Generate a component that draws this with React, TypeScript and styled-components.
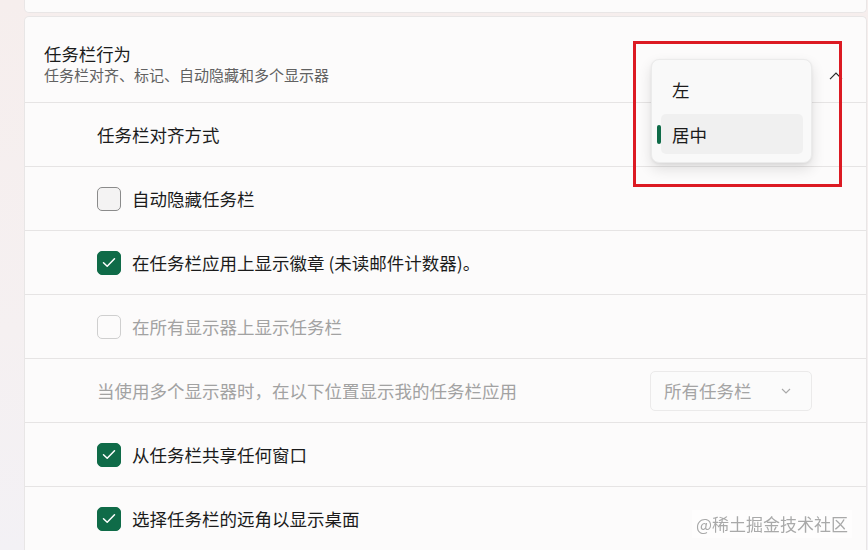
import React from 'react';
import styled, { createGlobalStyle } from 'styled-components';

const GlobalStyle = createGlobalStyle`
  html, body {
    margin: 0;
    padding: 0;
    height: 100%;
    overflow: hidden;
  }
  body {
    font-family: "Noto Sans CJK SC", "Noto Sans", sans-serif;
    background: linear-gradient(180deg, #f6eeed 0%, #f5f0f1 60%, #f3f1f5 100%);
    color: #1b1b1b;
  }
`;

type CheckState = 'off' | 'on' | 'disabled';

interface Setting {
  label: string;
  kind: 'text' | 'check' | 'select';
  state?: CheckState;
}

const settings: Setting[] = [
  { label: '任务栏对齐方式', kind: 'text' },
  { label: '自动隐藏任务栏', kind: 'check', state: 'off' },
  { label: '在任务栏应用上显示徽章 (未读邮件计数器)。', kind: 'check', state: 'on' },
  { label: '在所有显示器上显示任务栏', kind: 'check', state: 'disabled' },
  { label: '当使用多个显示器时，在以下位置显示我的任务栏应用', kind: 'select' },
  { label: '从任务栏共享任何窗口', kind: 'check', state: 'on' },
  { label: '选择任务栏的远角以显示桌面', kind: 'check', state: 'on' },
];

const App = () => {
  return (
    <Page>
      <GlobalStyle />
      <PrevCard />
      <MainCard>
        <Header>
          <HeaderText>
            <Title>任务栏行为</Title>
            <Subtitle>任务栏对齐、标记、自动隐藏和多个显示器</Subtitle>
          </HeaderText>
          <ChevronUp width="14" height="8" viewBox="0 0 14 8">
            <path d="M1 7.2 L7 1.2 L13 7.2" fill="none" stroke="#2a2a2a" strokeWidth="1.2" />
          </ChevronUp>
        </Header>

        {settings.map((s) => (
          <Row key={s.label}>
            {s.kind === 'check' && (
              <Box state={s.state!}>
                {s.state === 'on' && (
                  <svg width="14" height="11" viewBox="0 0 14 11">
                    <path d="M1.5 5.8 L5.2 9.3 L12.5 1.8" fill="none" stroke="#fff" strokeWidth="1.5" strokeLinecap="round" strokeLinejoin="round" />
                  </svg>
                )}
              </Box>
            )}
            <Label muted={s.kind === 'select' || s.state === 'disabled'}>{s.label}</Label>
            {s.kind === 'select' && (
              <Select>
                <span>所有任务栏</span>
                <svg width="10" height="6" viewBox="0 0 10 6">
                  <path d="M1 1 L5 5 L9 1" fill="none" stroke="#a8a8a8" strokeWidth="1.1" />
                </svg>
              </Select>
            )}
          </Row>
        ))}

        <Popup>
          <Option>左</Option>
          <Option selected>居中</Option>
        </Popup>
        <Highlight />
      </MainCard>
      <Watermark>@稀土掘金技术社区</Watermark>
    </Page>
  );
};

export default App;

const Page = styled.div`
  display: flex;
  flex-direction: column;
  gap: 3px;
  padding: 0 1px 0 24px;
  height: 550px;
  box-sizing: border-box;
`;

const PrevCard = styled.div`
  height: 13px;
  box-sizing: border-box;
  background: #fcfbfb;
  border: 1px solid #e9e6e6;
  border-top: none;
  border-radius: 0 0 5px 5px;
`;

const MainCard = styled.div`
  position: relative;
  flex: 1;
  background: #fcfbfb;
  border: 1px solid #e8e6e6;
  border-bottom: none;
  border-radius: 5px 5px 0 0;
`;

const Header = styled.div`
  height: 85px;
  display: flex;
  align-items: center;
  justify-content: space-between;
  padding: 8px 23px 0 19px;
  box-sizing: border-box;
`;

const HeaderText = styled.div`
  display: flex;
  flex-direction: column;
`;

const Title = styled.div`
  font-size: 17.4px;
  line-height: 22px;
  color: #1b1b1b;
`;

const Subtitle = styled.div`
  font-size: 15px;
  line-height: 20px;
  color: #616161;
`;

const ChevronUp = styled.svg`
  align-self: flex-start;
  margin-top: 47px;
`;

const Row = styled.div`
  height: 64px;
  box-sizing: border-box;
  border-top: 1px solid #e6e4e4;
  display: flex;
  align-items: center;
  padding: 0 54px 0 72px;
  gap: 11px;
`;

const Box = styled.div<{ state: CheckState }>`
  width: 24px;
  height: 24px;
  box-sizing: border-box;
  border-radius: 5px;
  flex-shrink: 0;
  display: flex;
  align-items: center;
  justify-content: center;
  background: ${(p) => (p.state === 'on' ? '#0f6b48' : p.state === 'off' ? '#f4f3f3' : 'transparent')};
  border: 1px solid ${(p) => (p.state === 'on' ? '#0f6b48' : p.state === 'off' ? '#8b8b8b' : '#cfcfcf')};
`;

const Label = styled.div<{ muted?: boolean }>`
  font-size: 17.5px;
  line-height: 24px;
  color: ${(p) => (p.muted ? '#a2a2a2' : '#1b1b1b')};
  flex: 1;
  white-space: nowrap;
`;

const Select = styled.div`
  width: 162px;
  height: 40px;
  box-sizing: border-box;
  border: 1px solid #ebeaea;
  border-radius: 5px;
  background: #fbfbfb;
  display: flex;
  align-items: center;
  justify-content: space-between;
  padding: 0 20px 0 13px;
  font-size: 17.5px;
  color: #a4a4a4;
`;

const Popup = styled.div`
  position: absolute;
  left: 626px;
  top: 42px;
  width: 161px;
  box-sizing: border-box;
  padding: 9px 8px 8px 9px;
  display: flex;
  flex-direction: column;
  gap: 5px;
  background: #f9f9f9;
  border: 1px solid #ebebeb;
  border-radius: 8px;
  box-shadow: 0 6px 14px rgba(0, 0, 0, 0.12), 0 1px 3px rgba(0, 0, 0, 0.06);
`;

const Option = styled.div<{ selected?: boolean }>`
  position: relative;
  height: 40px;
  display: flex;
  align-items: center;
  padding-left: 11px;
  font-size: 17.5px;
  color: #1b1b1b;
  border-radius: 5px;
  background: ${(p) => (p.selected ? '#f0f0f0' : 'transparent')};

  &::before {
    content: '';
    display: ${(p) => (p.selected ? 'block' : 'none')};
    position: absolute;
    left: -4px;
    top: 11px;
    width: 4px;
    height: 19px;
    border-radius: 2px;
    background: #0f6b48;
  }
`;

const Highlight = styled.div`
  position: absolute;
  left: 608px;
  top: 24px;
  width: 209px;
  height: 146px;
  box-sizing: border-box;
  border: 3px solid #dc1a23;
  pointer-events: none;
`;

const Watermark = styled.div`
  position: fixed;
  right: 16px;
  bottom: 12px;
  padding: 2px 4px;
  font-size: 17px;
  line-height: 24px;
  color: #a9a9a9;
  background: rgba(255, 255, 255, 0.6);
`;
